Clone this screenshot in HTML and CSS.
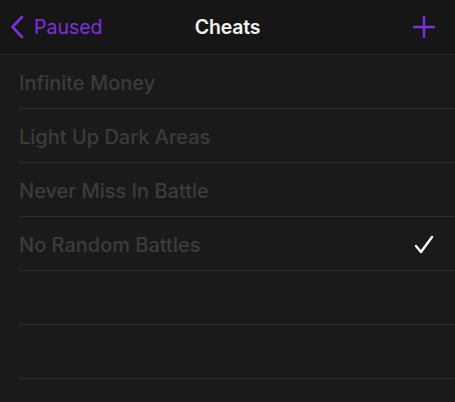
FILE: index.html
```html
<!DOCTYPE html>
<html>
<head>
<meta charset="utf-8">
<link rel="stylesheet" href="styles.css">
</head>
<body>
<div class="screen">
  <header class="navbar">
    <div class="back">
      <svg class="chevron" width="14" height="24" viewBox="0 0 14 24"><path d="M12 2 L2.5 12 L12 22" fill="none" stroke="#7b30e0" stroke-width="2.6" stroke-linecap="round" stroke-linejoin="round"/></svg>
      <span>Paused</span>
    </div>
    <div class="title">Cheats</div>
    <div class="add">
      <svg width="22" height="22" viewBox="0 0 22 22"><path d="M11 0.5 V21.5 M0.5 11 H21.5" stroke="#7b30e0" stroke-width="2.4" stroke-linecap="round"/></svg>
    </div>
  </header>
  <ul class="list">
    <li class="row"><span>Infinite Money</span></li>
    <li class="row"><span>Light Up Dark Areas</span></li>
    <li class="row"><span>Never Miss In Battle</span></li>
    <li class="row"><span>No Random Battles</span>
      <svg class="check" width="20" height="19" viewBox="0 0 20 19"><path d="M2 11 L7 17 L18 2" fill="none" stroke="#ffffff" stroke-width="2.4" stroke-linecap="round" stroke-linejoin="round"/></svg>
    </li>
    <li class="row"></li>
    <li class="row"></li>
  </ul>
</div>
</body>
</html>
```
FILE: styles.css
```css
html, body {
  margin: 0;
  padding: 0;
  background: #1a1a1a;
  font-family: Inter, "Noto Sans", "Liberation Sans", sans-serif;
}
.screen {
  width: 455px;
  height: 402px;
  overflow: hidden;
  background: #1a1a1a;
}
.navbar {
  height: 54px;
  border-bottom: 1px solid #2a2a2a;
  background: #161616;
  display: grid;
  grid-template-columns: 1fr auto 1fr;
  align-items: center;
}
.back {
  display: flex;
  align-items: center;
  padding-left: 10px;
  gap: 10px;
  color: #7b30e0;
  font-size: 19.5px;
  font-weight: 400;
}
.chevron {
  display: block;
}
.title {
  color: #f2f2f2;
  font-size: 19.5px;
  font-weight: 600;
  letter-spacing: -0.2px;
}
.add {
  display: flex;
  justify-content: flex-end;
  padding-right: 20px;
}
.add svg {
  display: block;
}
.list {
  list-style: none;
  margin: 0;
  padding: 0 0 0 19px;
}
.row {
  height: 51px;
  padding-top: 2px;
  box-sizing: content-box;
  border-bottom: 1px solid #2c2c2c;
  display: flex;
  align-items: center;
  justify-content: space-between;
  padding-right: 21px;
  color: #3c3c3c;
  font-size: 20px;
  font-weight: 500;
}
.check {
  display: block;
}
```
